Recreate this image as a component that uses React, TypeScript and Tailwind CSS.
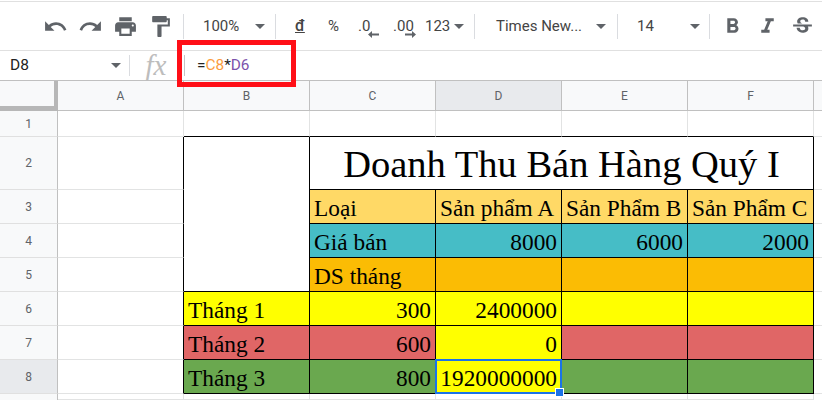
import React from "react";
import { MdUndo, MdRedo, MdPrint, MdFormatPaint, MdFormatBold, MdFormatItalic, MdStrikethroughS } from "react-icons/md";

const Caret = () => (
  <svg width="10" height="5" viewBox="0 0 10 5" className="shrink-0"><path d="M0 0h10L5 5z" fill="#5f6368" /></svg>
);
const Sep = () => <div className="w-px h-[25px] bg-[#dadce0] shrink-0" />;
const Ico = ({ children }: { children: React.ReactNode }) => (
  <div className="w-[35px] flex justify-center text-[#5f6368] text-[25px] shrink-0">{children}</div>
);

const GRID = "border-[#e2e3e3]";
const BL = "border-black";

type CellProps = {
  text?: string;
  bg?: string;
  right?: boolean;
  r?: boolean;
  b?: boolean;
  extra?: string;
};
const Cell = ({ text, bg = "", right, r, b, extra = "" }: CellProps) => (
  <div
    className={`box-border border-r border-b ${r ? "border-r-black" : "border-r-[#e2e3e3]"} ${b ? "border-b-black" : "border-b-[#e2e3e3]"} ${bg} ${right ? "justify-end pr-[4px]" : "justify-start pl-[4px]"} ${extra} flex items-end overflow-hidden whitespace-nowrap pb-[2px] text-[23.33px] leading-[26px] text-black font-['Liberation_Serif',serif]`}
  >
    {text}
  </div>
);

const ColHead = ({ t, active }: { t: string; active?: boolean }) => (
  <div className={`box-border border-r border-b border-[#c0c0c0] flex items-center justify-center text-[12px] text-[#5f6368] ${active ? "bg-[#e8eaed]" : "bg-[#f8f9fa]"}`}>{t}</div>
);
const RowHead = ({ t, active }: { t: string; active?: boolean }) => (
  <div className={`box-border border-r border-r-[#c0c0c0] border-b border-b-[#e0e0e0] flex items-center justify-center text-[12px] text-[#5f6368] ${active ? "bg-[#e8eaed]" : "bg-[#f8f9fa]"}`}>{t}</div>
);

const YEL = "bg-[#ffff00]";
const RED = "bg-[#e06666]";
const GRN = "bg-[#6aa84f]";
const HDR = "bg-[#ffd966]";
const TEAL = "bg-[#46bdc6]";
const ORG = "bg-[#fbbc04]";

export default function App() {
  return (
    <div className="relative w-[822px] h-[400px] overflow-hidden bg-white font-['Roboto',sans-serif]">
      {/* Toolbar */}
      <div className="h-[50px] mt-px box-border border-t border-b border-[#e0e0e0] flex items-center pl-[38px] text-[#444746]">
        <Ico><MdUndo /></Ico>
        <Ico><MdRedo /></Ico>
        <Ico><MdPrint /></Ico>
        <Ico><MdFormatPaint /></Ico>
        <div className="w-[5px] shrink-0" />
        <Sep />
        <div className="w-[91px] shrink-0 flex items-center pl-[19px] text-[15px] text-[#444]">
          <span className="w-[52px]">100%</span>
          <Caret />
        </div>
        <Sep />
        <div className="w-[198px] shrink-0 flex items-center text-[15px] text-[#444]">
          <span className="ml-[19px] w-[33px] text-[16px] font-medium underline leading-none">đ</span>
          <span className="w-[30px]">%</span>
          <span className="w-[35px] relative">.0
            <svg className="absolute left-[10px] top-[16px]" width="11" height="7" viewBox="0 0 11 7" preserveAspectRatio="none"><path d="M4 0v2.5h7v2H4V7L0 3.5z" fill="#5f6368" /></svg>
          </span>
          <span className="w-[32px] relative">.00
            <svg className="absolute left-[12px] top-[16px]" width="11" height="7" viewBox="0 0 11 7" preserveAspectRatio="none"><path d="M7 0v2.5H0v2h7V7l4-3.5z" fill="#5f6368" /></svg>
          </span>
          <span className="w-[29px]">123</span>
          <Caret />
        </div>
        <Sep />
        <div className="w-[142px] shrink-0 flex items-center pl-[21px] text-[15px] text-[#444]">
          <span className="w-[100px]">Times New...</span>
          <Caret />
        </div>
        <Sep />
        <div className="w-[91px] shrink-0 flex items-center pl-[19px] text-[15px] text-[#444]">
          <span className="w-[53px]">14</span>
          <Caret />
        </div>
        <Sep />
        <div className="w-[5px] shrink-0" />
        <Ico><MdFormatBold /></Ico>
        <Ico><MdFormatItalic /></Ico>
        <Ico><MdStrikethroughS /></Ico>
      </div>

      {/* Formula bar */}
      <div className="h-[30px] box-border border-b border-[#c0c0c0] flex items-center">
        <div className="w-[129px] shrink-0 pl-[10px] pr-[8px] flex items-center justify-between text-[15.5px] text-[#222]">
          <span>D8</span>
          <Caret />
        </div>
        <div className="w-px h-[21px] bg-[#dadce0] shrink-0" />
        <div className="w-[54px] shrink-0 flex justify-center pr-[2px] text-[29px] italic text-[#bdbdbd] font-['Liberation_Serif',serif] leading-none">fx</div>
        <div className="w-px h-[21px] bg-[#c4c4c4] shrink-0" />
        <div className="pl-[12px] text-[15.4px] text-[#222]">
          =<span className="text-[#fb9c3e]">C8</span>*<span className="text-[#7b52ab]">D6</span>
        </div>
      </div>

      {/* Sheet */}
      <div className="grid grid-cols-[58px_126px_126px_126px_126px_126px_126px_1fr] grid-rows-[30px_26px_53px_34px_34px_34px_34px_34px_34px_1fr] h-[319px]">
        <div className="box-border border-r-4 border-b-[5px] border-[#b7b7b7] bg-[#f8f9fa]" />
        <ColHead t="A" />
        <ColHead t="B" />
        <ColHead t="C" />
        <ColHead t="D" active />
        <ColHead t="E" />
        <ColHead t="F" />
        <div className="bg-[#f8f9fa] border-b border-[#c0c0c0]" />

        {/* 1 */}
        <RowHead t="1" />
        <Cell />
        <Cell b />
        <Cell b />
        <Cell b />
        <Cell b />
        <Cell b />
        <div className={`border-b ${GRID}`} />

        {/* 2 */}
        <RowHead t="2" />
        <Cell r />
        <div className={`row-span-4 box-border border-r border-b ${BL} bg-white`} />
        <div className={`col-span-4 box-border border-r border-b ${BL} flex items-center justify-center pt-[3px] text-[38.5px] text-black font-['Liberation_Serif',serif]`}>Doanh Thu Bán Hàng Quý I</div>
        <div className={`border-b ${GRID}`} />

        {/* 3 */}
        <RowHead t="3" />
        <Cell r />
        <Cell text="Loại" bg={HDR} r b />
        <Cell text="Sản phẩm A" bg={HDR} r b />
        <Cell text="Sản Phẩm B" bg={HDR} r b />
        <Cell text="Sản Phẩm C" bg={HDR} r b />
        <div className={`border-b ${GRID}`} />

        {/* 4 */}
        <RowHead t="4" />
        <Cell r />
        <Cell text="Giá bán" bg={TEAL} r b />
        <Cell text="8000" bg={TEAL} right r b />
        <Cell text="6000" bg={TEAL} right r b />
        <Cell text="2000" bg={TEAL} right r b />
        <div className={`border-b ${GRID}`} />

        {/* 5 */}
        <RowHead t="5" />
        <Cell r />
        <Cell text="DS tháng" bg={ORG} r b />
        <Cell bg={ORG} r b />
        <Cell bg={ORG} r b />
        <Cell bg={ORG} r b />
        <div className={`border-b ${GRID}`} />

        {/* 6 */}
        <RowHead t="6" />
        <Cell r />
        <Cell text="Tháng 1" bg={YEL} r b />
        <Cell text="300" bg={YEL} right r b />
        <Cell text="2400000" bg={YEL} right r b />
        <Cell bg={YEL} r b />
        <Cell bg={YEL} r b />
        <div className={`border-b ${GRID}`} />

        {/* 7 */}
        <RowHead t="7" />
        <Cell r />
        <Cell text="Tháng 2" bg={RED} r b />
        <Cell text="600" bg={RED} right r b />
        <Cell text="0" bg={YEL} right r b />
        <Cell bg={RED} r b />
        <Cell bg={RED} r b />
        <div className={`border-b ${GRID}`} />

        {/* 8 */}
        <RowHead t="8" active />
        <Cell r />
        <Cell text="Tháng 3" bg={GRN} r b />
        <Cell text="800" bg={GRN} right r b />
        <div className="relative">
          <Cell text="1920000000" bg={YEL} right r b extra="h-full" />
          <div className="absolute left-[-1px] top-[-1px] w-[127px] h-[35px] box-border border-2 border-[#1a73e8]" />
          <div className="absolute left-[119px] top-[28px] w-[9px] h-[9px] bg-[#1a73e8] border border-white box-border" />
        </div>
        <Cell bg={GRN} r b />
        <Cell bg={GRN} r b />
        <div className={`border-b ${GRID}`} />

        {/* 9 */}
        <div className="bg-[#f8f9fa] border-r border-[#c0c0c0]" />
        <Cell />
        <Cell />
        <Cell />
        <Cell />
        <Cell />
        <Cell />
        <div />
      </div>

      {/* Red annotation rectangle */}
      <div className="absolute left-[177px] top-[40px] w-[119px] h-[47px] box-border border-[5px] border-[#ff0f17]" />
    </div>
  );
}
